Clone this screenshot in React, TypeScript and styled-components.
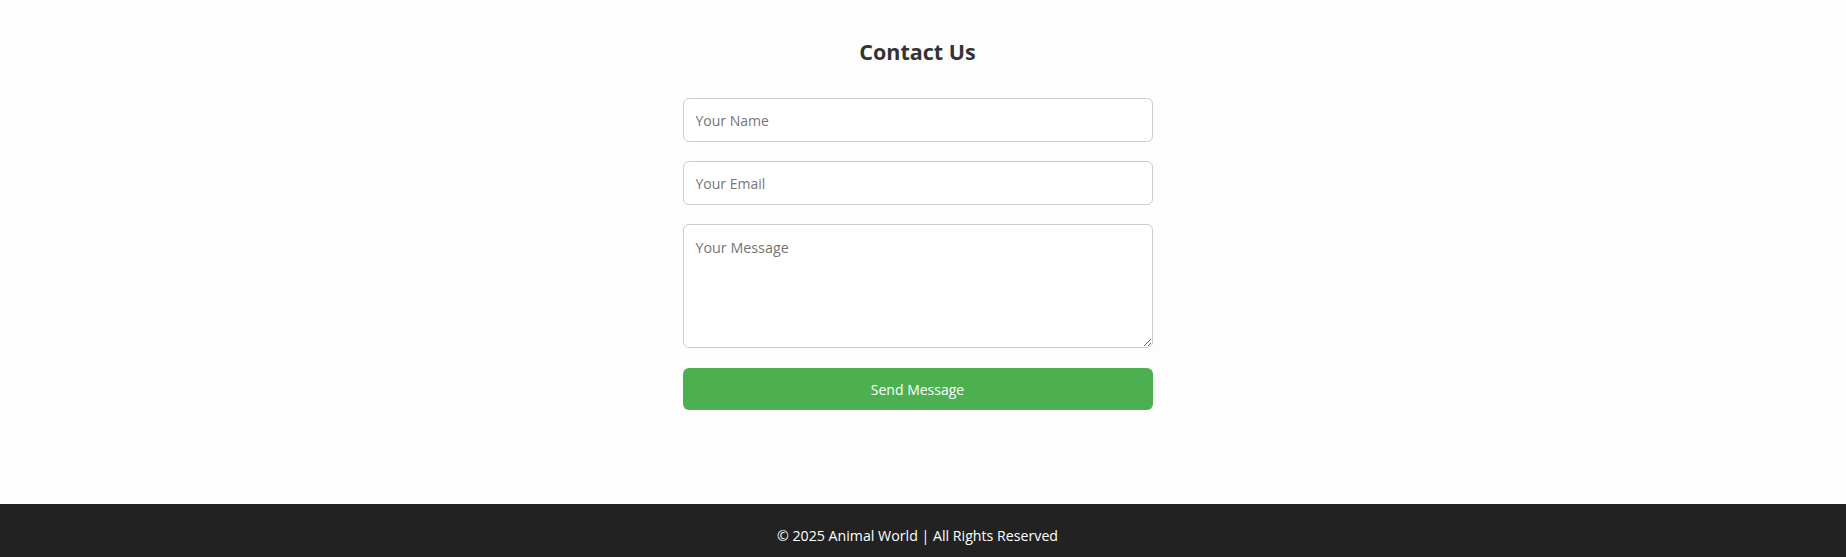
import React from "react";
import styled, { createGlobalStyle } from "styled-components";

const Global = createGlobalStyle`
  html, body { margin: 0; padding: 0; }
  body {
    background: #fdfdfd;
    font-family: "Open Sans", "Noto Sans", sans-serif;
    color: #333;
  }
`;

const Page = styled.div`
  display: flex;
  flex-direction: column;
  min-height: 557px;
`;

const Section = styled.section`
  display: flex;
  flex-direction: column;
  align-items: center;
  padding: 36px 11px 94px 0;
`;

const Title = styled.h2`
  margin: 0 0 30px;
  font-size: 21.5px;
  line-height: 32px;
  font-weight: 700;
  color: #333;
`;

const Form = styled.form`
  width: 470px;
  display: flex;
  flex-direction: column;
  gap: 19px;
`;

const fieldBase = `
  box-sizing: border-box;
  width: 100%;
  border: 1px solid #ccc;
  border-radius: 6px;
  background: #fff;
  padding: 12px;
  font-family: "Open Sans", "Noto Sans", sans-serif;
  font-size: 14px;
  color: #333;
  outline: none;
  &::placeholder { color: #757575; }
`;

const Input = styled.input`
  ${fieldBase}
  height: 44px;
`;

const TextArea = styled.textarea`
  ${fieldBase}
  height: 124px;
  resize: vertical;
  display: block;
  font-size: 14.3px;
  line-height: 20px;
  padding-top: 12.5px;
`;

const Button = styled.button`
  margin-top: 1px;
  height: 42px;
  border: none;
  border-radius: 6px;
  background: #4caf50;
  color: #fff;
  font-family: "Open Sans", "Noto Sans", sans-serif;
  font-size: 14px;
  cursor: pointer;
`;

const Footer = styled.footer`
  background: #222;
  color: #fff;
  text-align: center;
  padding: 20px 31px 20px 20px;
  font-size: 14.2px;
  line-height: 24px;
`;

export default function App() {
  return (
    <>
      <Global />
      <Page>
        <Section>
          <Title>Contact Us</Title>
          <Form onSubmit={(e) => e.preventDefault()}>
            <Input type="text" placeholder="Your Name" />
            <Input type="email" placeholder="Your Email" />
            <TextArea placeholder="Your Message" />
            <Button type="submit">Send Message</Button>
          </Form>
        </Section>
        <Footer>© 2025 Animal World | All Rights Reserved</Footer>
      </Page>
    </>
  );
}
